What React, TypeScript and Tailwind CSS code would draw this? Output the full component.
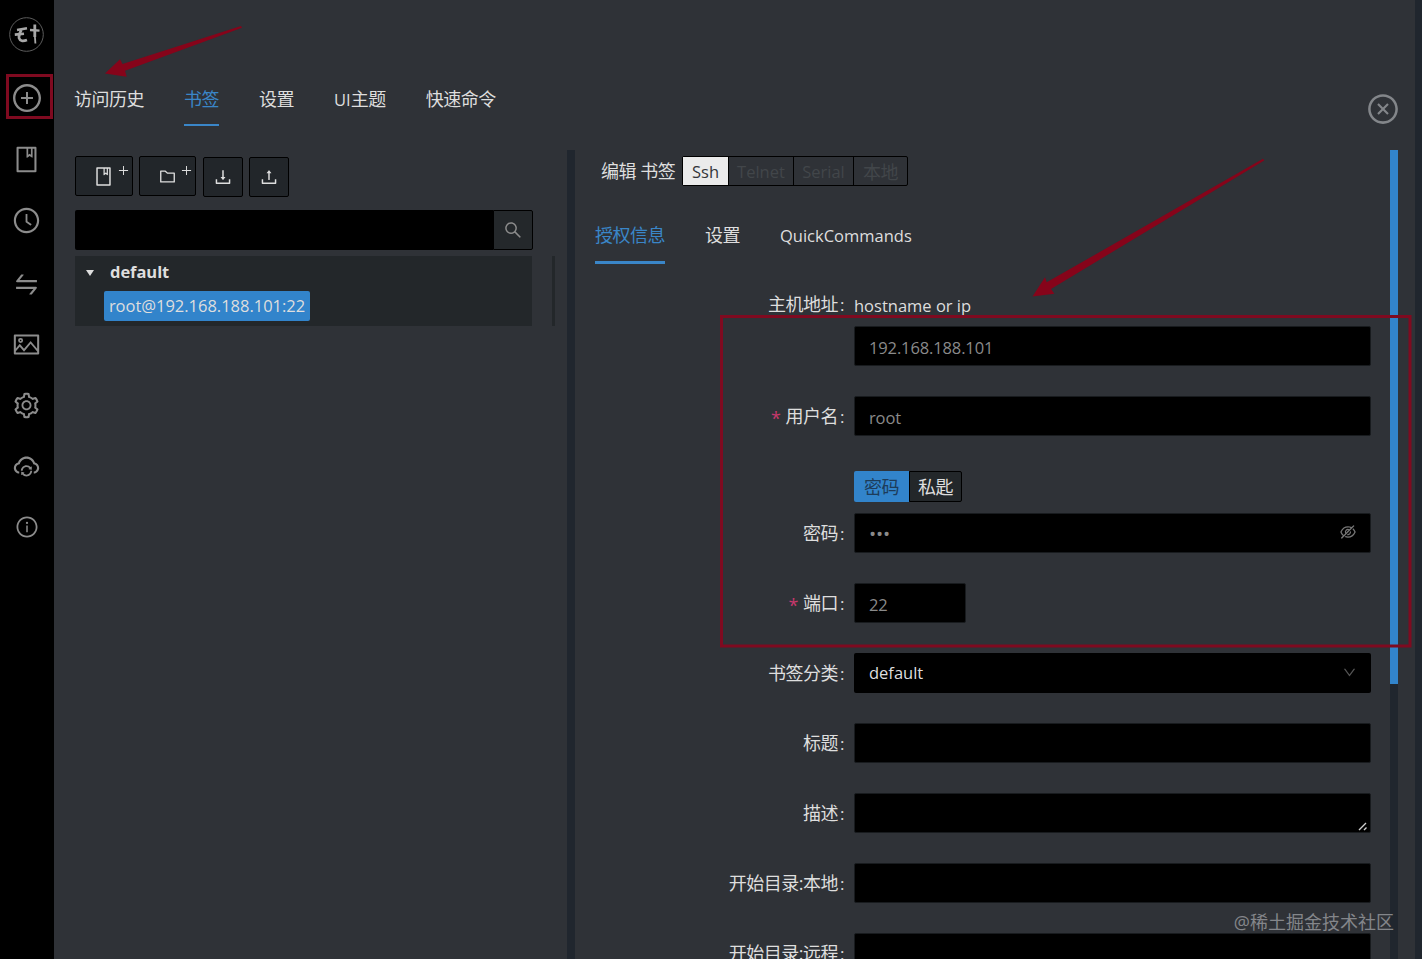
import { useState } from 'react';
import type { ReactNode } from 'react';
import {
  AiOutlineBook,
  AiOutlineClockCircle,
  AiOutlineCloseCircle,
  AiOutlineCloudSync,
  AiOutlineDown,
  AiOutlineDownload,
  AiOutlineEyeInvisible,
  AiOutlineFolder,
  AiOutlineInfoCircle,
  AiOutlinePicture,
  AiOutlinePlus,
  AiOutlinePlusCircle,
  AiOutlineSearch,
  AiOutlineSetting,
  AiOutlineSwap,
  AiOutlineUpload,
} from 'react-icons/ai';

const inputClass =
  'block h-10 w-full rounded-xs border border-[#181b1e] bg-black px-3.5 pt-0.5 text-[16.5px] tracking-[-0.13px] text-[#8a8a8a] outline-none';

const sideItems = [
  { key: 'new', icon: AiOutlinePlusCircle, size: 32, box: 'h-[62px] pt-px' },
  { key: 'bookmarks', icon: AiOutlineBook, size: 29, box: 'h-[62px] pr-px pt-px' },
  { key: 'history', icon: AiOutlineClockCircle, size: 29, box: 'h-[62px] pr-px pb-px' },
  { key: 'transfer', icon: AiOutlineSwap, size: 29, box: 'h-[65px] pr-px' },
  { key: 'themes', icon: AiOutlinePicture, size: 29, box: 'h-[55px] pr-px' },
  { key: 'settings', icon: AiOutlineSetting, size: 29, box: 'h-[67px] pr-px' },
  { key: 'sync', icon: AiOutlineCloudSync, size: 29, box: 'h-[54px] pr-px pt-px' },
  { key: 'about', icon: AiOutlineInfoCircle, size: 24, box: 'h-[67px] pt-px' },
];

function Logo() {
  return (
    <svg width="35" height="35" viewBox="0 0 35 35" fill="none" stroke="#a8a8a8">
      <circle cx="17.5" cy="17.5" r="16.8" stroke="#5c5c5c" />
      <path d="M8 13 L18 11.2" strokeWidth="2.4" />
      <path d="M5.8 17.6 L15 16.8" strokeWidth="2.6" />
      <path d="M12.5 13 Q9.5 17 10 21 Q11.5 25.5 18 23" strokeWidth="2.6" />
      <path d="M21 13 L30.5 13.6" strokeWidth="2.4" />
      <path d="M25.8 7.5 L25.8 20" strokeWidth="2.8" />
      <path d="M25.8 18 L26.4 26.5" strokeWidth="1.8" />
    </svg>
  );
}

function Sidebar() {
  return (
    <aside className="flex w-[54px] shrink-0 flex-col items-center bg-black text-[#8c8c8c]">
      <div className="flex h-[66px] items-center pt-[3px] pr-px">
        <Logo />
      </div>
      {sideItems.map(({ key, icon: Icon, size, box }) => (
        <button key={key} className={`flex w-full shrink-0 items-center justify-center ${box}`}>
          <Icon size={size} />
        </button>
      ))}
    </aside>
  );
}

function En({ children }: { children: ReactNode }) {
  return <span className="text-[16.5px] tracking-[0px]">{children}</span>;
}

function MainTabs() {
  const [active, setActive] = useState(1);
  const tabs = ['访问历史', '书签', '设置', <><En>UI</En>主题</>, '快速命令'];
  return (
    <nav className="flex h-[126px] shrink-0 items-end gap-10 pl-5">
      {tabs.map((tab, i) => (
        <button
          key={i}
          onClick={() => setActive(i)}
          className={`h-10 border-b-2 pb-3 leading-[26px] whitespace-nowrap ${
            active === i ? 'border-[#3a86c8] text-[#3a86c8]' : 'border-transparent'
          }`}
        >
          {tab}
        </button>
      ))}
    </nav>
  );
}

function BookmarkList() {
  const btn = 'flex h-10 items-center rounded-xs border border-black bg-[#22262a]';
  return (
    <section className="w-[513px] shrink-0 pt-1.5 pl-[21px]">
      <div className="flex h-[41px] items-start">
        <button className={`${btn} w-[58px] pl-[17px]`}>
          <AiOutlineBook size={21} />
          <AiOutlinePlus size={13} className="mb-3 ml-[3px]" />
        </button>
        <button className={`${btn} ml-1.5 w-[57px] pl-[18px]`}>
          <AiOutlineFolder size={19} />
          <AiOutlinePlus size={13} className="mb-3 ml-[3px]" />
        </button>
        <button className={`${btn} mt-px ml-[7px] w-10 justify-center`}>
          <AiOutlineDownload size={20} />
        </button>
        <button className={`${btn} mt-px ml-1.5 w-10 justify-center`}>
          <AiOutlineUpload size={20} />
        </button>
      </div>

      <div className="mt-[13px] flex h-10 w-[458px]">
        <input className="min-w-0 flex-1 rounded-l-xs bg-black px-3.5 outline-none" />
        <button className="flex w-10 items-center justify-center rounded-r-xs border border-black bg-[#24282b] text-[#8c8c8c]">
          <AiOutlineSearch size={20} />
        </button>
      </div>

      <div className="mt-1.5 flex h-[70px]">
        <div className="w-[457px] bg-[#23272a]">
          <div className="flex h-[35px] items-center pb-0.5 pl-[11px]">
            <svg width="8" height="6" viewBox="0 0 8 6" fill="#dedede">
              <path d="M0 0h8L4 6z" />
            </svg>
            <span className="ml-4 text-[16.5px] font-bold tracking-[-0.05px]">default</span>
          </div>
          <button className="ml-[29px] block h-[30px] w-[206px] rounded-xs bg-[#3284cb] pt-px text-[16.5px] tracking-[-0.02px] whitespace-nowrap">
            root@192.168.188.101:22
          </button>
        </div>
        <div className="ml-5 w-[3px] bg-[#23272a]" />
      </div>
    </section>
  );
}

function Field({
  label,
  required,
  className = 'mt-[30px]',
  children,
}: {
  label: string;
  required?: boolean;
  className?: string;
  children: ReactNode;
}) {
  return (
    <div className={`flex h-10 shrink-0 ${className}`}>
      <label className="flex w-[249px] shrink-0 items-center justify-end pt-px whitespace-nowrap">
        {required && <span className="mt-1 mr-[5px] text-[18px] text-[#c8386c]">*</span>}
        {label}
        <span className="ml-0.5 text-[17px]">:</span>
      </label>
      <div className="ml-2.5 w-[517px]">{children}</div>
    </div>
  );
}

function BookmarkForm() {
  return (
    <section className="flex w-[815px] shrink-0 flex-col overflow-hidden pt-1.5 pl-5">
      <div className="flex h-[30px] shrink-0 items-center pl-1.5">
        <h2 className="mr-1.5 w-[75px] whitespace-nowrap">编辑 书签</h2>
        <div className="flex h-[30px] rounded-xs border border-black text-[16.5px] tracking-[0px] text-[#42464a]">
          <button className="w-[45px] bg-[#ebebeb] pt-0.5 text-[#33363a]">Ssh</button>
          <button className="w-[65px] border-l border-black pt-0.5">Telnet</button>
          <button className="w-[60px] border-l border-black pt-0.5">Serial</button>
          <button className="w-[54px] border-l border-black pt-0.5 text-[18px] tracking-[-0.5px]">本地</button>
        </div>
      </div>

      <nav className="flex h-[78px] shrink-0 items-end gap-10">
        <button className="h-[42px] border-b-[3px] border-[#3a86c8] pb-[13px] leading-[26px] text-[#3a86c8]">授权信息</button>
        <button className="h-[42px] pb-4 leading-[26px]">设置</button>
        <button className="h-[42px] pb-4 leading-[26px]"><En>QuickCommands</En></button>
      </nav>

      <Field label="主机地址" className="mt-5">
        <div className="flex h-full items-center pt-1"><En>hostname or ip</En></div>
      </Field>
      <div className="mt-0.5 ml-[259px] h-10 w-[517px] shrink-0">
        <input className={inputClass} defaultValue="192.168.188.101" />
      </div>
      <Field label="用户名" required>
        <input className={inputClass} defaultValue="root" />
      </Field>
      <div className="mt-[35px] ml-[259px] flex h-[31px] shrink-0">
        <button className="w-[55px] rounded-l-xs bg-[#3284cb] pt-0.5 text-[#1d3c5a]">密码</button>
        <button className="w-[53px] rounded-r-xs border border-black bg-[#23272a] pt-0.5">私匙</button>
      </div>
      <Field label="密码" className="mt-[11px]">
        <div className="relative">
          <input type="password" className={`${inputClass} text-[19px]`} defaultValue="123" />
          <AiOutlineEyeInvisible size={18} className="absolute top-2.5 right-3.5 text-[#777]" />
        </div>
      </Field>
      <Field label="端口" required>
        <div className="w-28">
          <input className={inputClass} defaultValue="22" />
        </div>
      </Field>
      <Field label="书签分类">
        <div className="flex h-10 items-center justify-between rounded-xs bg-black px-[15px] pt-px">
          <En>default</En>
          <AiOutlineDown size={15} className="-mr-px mb-0.5 text-[#555]" />
        </div>
      </Field>
      <Field label="标题">
        <input className={inputClass} />
      </Field>
      <Field label="描述">
        <div className="relative">
          <textarea className={`${inputClass} resize-none`} />
          <svg width="10" height="9" viewBox="0 0 10 9" stroke="#d0d0d0" strokeWidth="1.4" className="absolute right-[3px] bottom-0.5">
            <path d="M1 8L8 1M6 8L8.5 5.5" />
          </svg>
        </div>
      </Field>
      <Field label="开始目录:本地">
        <input className={inputClass} />
      </Field>
      <Field label="开始目录:远程">
        <input className={inputClass} />
      </Field>
    </section>
  );
}

// Red boxes and arrows drawn on top of the window
function Annotations() {
  return (
    <svg className="pointer-events-none absolute inset-0" width="1422" height="959" viewBox="0 0 1422 959">
      <g fill="none" stroke="#7f0a20" strokeWidth="3">
        <rect x="7.5" y="75.5" width="44" height="42" />
        <rect x="721.5" y="316.5" width="688.5" height="329.5" />
      </g>
      <g fill="#86041a">
        <path d="M105 73.5L120 59.3L122.5 64L241 26L242 27.8L125 70.7L126.7 76.7Z" />
        <path d="M1032.5 296.5L1045 277.3L1046.7 282.3L1263 158.8L1264.2 160.4L1051 289L1054.3 293.7Z" />
      </g>
    </svg>
  );
}

export default function App() {
  return (
    <div className="relative flex h-[959px] w-[1422px] overflow-hidden bg-[#2f3237] font-['Open_Sans','Noto_Sans_CJK_SC',sans-serif] text-[18px] tracking-[-0.5px] text-[#dedede]">
      <Sidebar />
      <main className="flex min-w-0 flex-1 flex-col">
        <MainTabs />
        <div className="mt-6 flex min-h-0 flex-1">
          <BookmarkList />
          <div className="w-2 shrink-0 bg-[#20262e]" />
          <BookmarkForm />
          <div className="w-2 shrink-0 bg-[#20262e]">
            <div className="h-[534px] bg-[#3284cb]" />
          </div>
        </div>
      </main>
      <div className="w-[7px] shrink-0 bg-[#20262e]" />

      <button className="absolute top-[92px] left-[1366px] text-[#83868a]">
        <AiOutlineCloseCircle size={34} />
      </button>
      <Annotations />
      <div className="absolute right-7 bottom-6 text-[18px] leading-[26px] tracking-[0px] whitespace-nowrap text-[#84868a]">
        @稀土掘金技术社区
      </div>
    </div>
  );
}
